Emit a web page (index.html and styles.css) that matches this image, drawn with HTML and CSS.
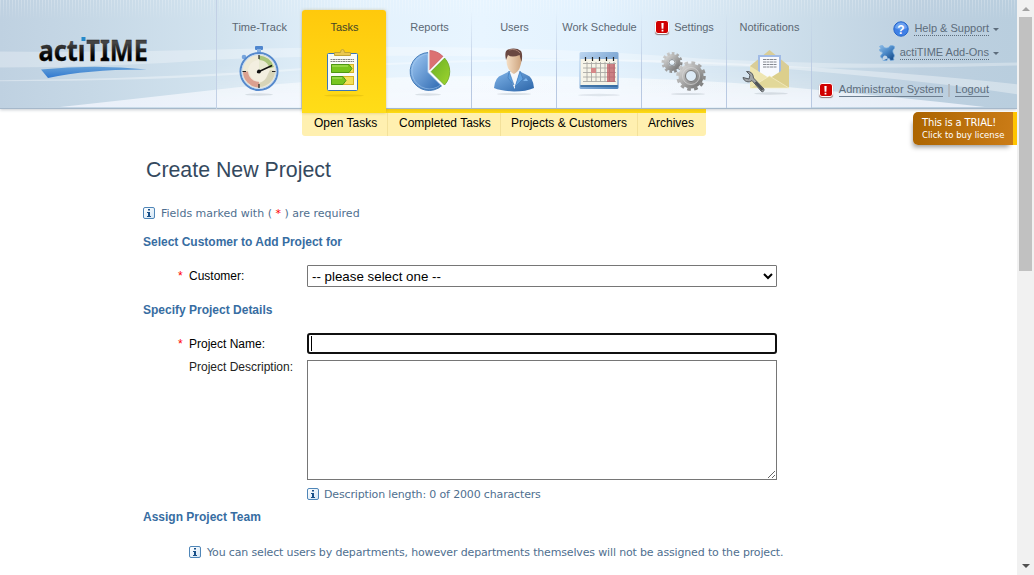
FILE: index.html
```html
<!DOCTYPE html>
<html lang="en">
<head>
<meta charset="utf-8">
<title>actiTIME - Create New Project</title>
<link rel="stylesheet" href="styles.css">
</head>
<body>
<div class="window">
<div class="page">
  <header class="header">
    <svg class="sky" viewBox="0 0 1017 109" preserveAspectRatio="none">
      <defs>
        <linearGradient id="hill" x1="0" y1="0" x2="0" y2="1"><stop offset="0" stop-color="#fff" stop-opacity=".5"/><stop offset="1" stop-color="#f3f6ff" stop-opacity=".8"/></linearGradient>
        <pattern id="pin" width="3" height="20" patternUnits="userSpaceOnUse"><rect width="1" height="20" fill="#fff"/></pattern>
        <linearGradient id="pinfade" x1="0" y1="0" x2="0" y2="1"><stop offset="0" stop-color="#fff" stop-opacity=".25"/><stop offset="1" stop-color="#fff" stop-opacity="0"/></linearGradient>
        <mask id="pm"><rect width="1017" height="20" fill="url(#pinfade)"/></mask>
      </defs>
      <rect width="1017" height="20" fill="url(#pin)" mask="url(#pm)"/>
      <path d="M0 52Q110 53 220 50Q500 42 700 59Q850 67 1017 63V66Q860 71 700 66Q450 50 220 60Q110 68 0 68Z" fill="#fff" opacity=".3"/>
      <path d="M0 82Q150 82 260 74Q500 54 740 66Q900 78 1017 95V85Q900 72 740 64Q500 52 260 72Q130 80 0 81Z" fill="#fff" opacity=".35"/>
      <path d="M60 108Q150 98 220 90Q340 78 450 77Q650 75 800 89Q900 98 985 108Z" fill="url(#hill)"/>
    </svg>
    <svg class="logo" width="120" height="50" viewBox="34 32 120 50">
      <defs>
        <linearGradient id="ink" x1="0" y1="0" x2="0" y2="1"><stop offset=".35" stop-color="#444"/><stop offset=".7" stop-color="#000"/></linearGradient>
        <linearGradient id="swoosh" x1="0" y1="0" x2="0" y2="1"><stop offset="0" stop-color="#64a0d8"/><stop offset="1" stop-color="#2f78d0"/></linearGradient>
        <clipPath id="nodot"><path d="M34 32H78.500V44.300H86.600V32H154V82H34Z"/></clipPath>
      </defs>
      <text class="logo-text" x="38.5" y="60.5" textLength="109.500" lengthAdjust="spacingAndGlyphs" fill="url(#ink)" clip-path="url(#nodot)">actiTIME</text>
      <rect x="81.500" y="37" width="4" height="4" fill="#2589ca"/>
      <path d="M41 69.500Q95 64 147 69.500Q90 69 48 78Z" fill="url(#swoosh)"/>
    </svg>
    <nav class="tabs">
      <a class="tab"><span class="label">Time-Track</span>
        <svg class="icon" viewBox="0 0 50 52">
          <ellipse cx="25" cy="48.500" rx="14" ry="1.200" fill="#6d7c88" opacity=".2"/>
          <rect x="21" y="0" width="8" height="4" rx="1" fill="#4f86ce"/><rect x="23" y="3" width="4" height="5" fill="#86afe0"/>
          <circle cx="10" cy="11" r="2.300" fill="#77a5dd"/>
          <circle cx="25" cy="25.500" r="18.500" fill="#eeead6" stroke="#5589cd" stroke-width="2"/>
          <circle cx="25" cy="25.500" r="17" fill="none" stroke="#c3daf6"/>
          <path d="M25 25.500V9.500A16 16 0 0 1 40 21Z" fill="#a9c57b"/>
          <path d="M9 25.500A16 16 0 0 0 25 41.500V35A10 10 0 0 1 15 25.500Z" fill="#dba090"/>
          <circle cx="25" cy="25" r="11" fill="#f3f0e2" opacity=".85"/>
          <path d="M34 28Q31 36 25 37V41A16 16 0 0 0 41 25L36 24Z" fill="#c8c4a4" opacity=".6"/>
          <path d="M25 9V13M25 38V42M8.500 25.500H12M38 25.500H41.500" stroke="#222" stroke-width="1.200"/>
          <path d="M23 26.500L38 19.500" stroke="#111" stroke-width="1.400"/><circle cx="25" cy="25.500" r="1.900" fill="#111"/>
        </svg></a>
      <a class="tab active"><span class="label">Tasks</span>
        <svg class="icon" viewBox="0 0 50 52">
          <ellipse cx="25" cy="49.500" rx="20" ry="1.200" fill="#a78600" opacity=".2"/>
          <rect x="8.500" y="7.500" width="30" height="37" rx="1" fill="#fafbf5" stroke="#3b77b8"/>
          <path d="M15.500 9.500V6.500H21.500Q21.500 3.500 23.500 3.500Q25.500 3.500 25.500 6.500H31.500V9.500Z" fill="#ebc84e" stroke="#c2a434"/>
          <path d="M11.500 13.500H35M11.500 15.500H35" stroke="#84857e" stroke-dasharray="2 .5"/>
          <rect x="12.500" y="18.500" width="22" height="8" fill="#f4df58" stroke="#d5b425"/><path d="M12.500 18.500H30L33 22.500L30 26.500H12.500Z" fill="#78c51c" stroke="#4c9811"/>
          <path d="M13 20H29" stroke="#b4e769"/>
          <rect x="12.500" y="30.500" width="22" height="8" fill="#f4df58" stroke="#d5b425"/><path d="M12.500 30.500H24L27 34.500L24 38.500H12.500Z" fill="#78c51c" stroke="#4c9811"/><path d="M13 32H23" stroke="#b4e769"/>
        </svg></a>
      <a class="tab"><span class="label">Reports</span>
        <svg class="icon" viewBox="0 0 50 52">
          <defs><linearGradient id="pie" x2="1" y2="1"><stop stop-color="#a5cdf6"/><stop offset="1" stop-color="#2a66af"/></linearGradient><linearGradient id="green" y2="1"><stop stop-color="#68ae25"/><stop offset="1" stop-color="#9fd52e"/></linearGradient></defs>
          <ellipse cx="24" cy="48.500" rx="13" ry="1.200" fill="#6d7c88" opacity=".2"/>
          <path d="M24.500 26L38 39.500A19 19 0 1 1 24.500 6.500Z" fill="url(#pie)" stroke="#477db9" stroke-width="1"/>
          <path d="M23.500 26L36.500 39A17.500 17.500 0 1 1 23.500 8Z" fill="none" stroke="#acd0f2" stroke-width=".7" opacity=".7"/>
          <path d="M25.500 24V4.500A20 20 0 0 1 39 10.500Z" fill="#dc7172" stroke="#c75b61" stroke-width=".8"/>
          <path d="M27 25.500L40.500 12A20 20 0 0 1 40.500 39Z" fill="url(#green)" stroke="#6ca625" stroke-width=".8"/>
          <path d="M24.800 4V26L40 41M25 26L40 11" stroke="#fff" fill="none" stroke-width="1.300"/>
        </svg></a>
      <a class="tab"><span class="label">Users</span>
        <svg class="icon shifted" viewBox="0 0 50 52">
          <defs><linearGradient id="suit" y2="1"><stop stop-color="#80b4e8"/><stop offset="1" stop-color="#2a64a8"/></linearGradient><linearGradient id="skin" x2="1"><stop stop-color="#f5dfc5"/><stop offset="1" stop-color="#cda37d"/></linearGradient></defs>
          <ellipse cx="24" cy="48" rx="17" ry="1" fill="#6d7c88" opacity=".2"/>
          <path d="M4 42Q5 31 12 29L19 25.500H30L37 29Q43 31 44 42Q36 45.500 24 45.500Q11 45 4 42Z" fill="url(#suit)"/>
          <path d="M18.500 26L24.500 43L30 25Z" fill="#f5f7fa"/><path d="M19 25L24 39L18 32ZM30 25L25 41L33 33Z" fill="#60a1df" stroke="#376fae" stroke-width=".5"/>
          <path d="M16.500 10Q16 18 18 22Q21 27 24 28Q29 25 30 21Q32 16 31.500 10Q24 6 16.500 10Z" fill="url(#skin)"/>
          <path d="M16 14Q14 5 18 3.500Q26 1 31 5Q33 8 31.500 16L29.500 9Q22 12 18 9Z" fill="#6a4841"/><path d="M19 4Q26 2 30 7" stroke="#a58074" fill="none"/>
          <path d="M33 35H38L36 32Z" fill="#7db5ed"/>
        </svg></a>
      <a class="tab"><span class="label">Work Schedule</span>
        <svg class="icon shifted" viewBox="0 0 50 52">
          <defs><linearGradient id="cal" y2="1"><stop stop-color="#bed7f1"/><stop offset="1" stop-color="#4b82bd"/></linearGradient></defs>
          <ellipse cx="24" cy="49" rx="21" ry="1.200" fill="#6d7c88" opacity=".15"/>
          <rect x="4.500" y="6" width="39" height="37" rx="1.500" fill="url(#cal)"/>
          <rect x="5.500" y="13" width="37" height="26" fill="#f6f4e8"/>
          <path d="M8 17.500H41M8 22H41M8 26.500H41M8 31H41M8 35.500H41M12 16V36M16.500 16V36M21 16V36M25.500 16V36M30 16V36M34.500 16V36M39 16V36" stroke="#aaa9a5" stroke-width=".9"/>
          <rect x="32" y="18" width="8" height="18" fill="#bd5961" opacity=".75"/><rect x="16" y="22" width="5" height="5" fill="#d68787"/>
          <path d="M10.500 11V15M17.500 11V15M24.500 11V15M31.500 11V15M38.500 11V15" stroke="#252525" stroke-width="1.200"/>
          <path d="M5.500 40H42.500" stroke="#2f6599" stroke-width="1.500"/>
        </svg></a>
      <a class="tab"><span class="label"><i class="alert"><svg viewBox="0 0 8 8"><path d="M3 0H5L4.800 5H3.200ZM3.200 6H4.800V7.600H3.200Z" fill="#fff"/></svg></i>Settings</span>
        <svg class="icon shifted" viewBox="0 0 50 52">
          <defs><linearGradient id="steel" x2="1" y2="1"><stop stop-color="#d4d4d3"/><stop offset="1" stop-color="#777"/></linearGradient></defs>
          <ellipse cx="28" cy="48" rx="17" ry="1" fill="#6d7c88" opacity=".2"/>
          <g fill="none" stroke="url(#steel)"><circle cx="12" cy="16.500" r="6" stroke-width="5"/><circle cx="12" cy="16.500" r="9" stroke-width="3" stroke-dasharray="2.600 2.055"/>
          <circle cx="31" cy="30" r="9" stroke-width="7"/><circle cx="31" cy="30" r="13" stroke-width="3.600" stroke-dasharray="3.600 3.207"/></g>
          <circle cx="12" cy="16.500" r="3" fill="none" stroke="#777" stroke-width=".8"/><circle cx="31" cy="30" r="5.500" fill="none" stroke="#777" stroke-width="1"/><circle cx="31" cy="30" r="8.500" fill="none" stroke="#d9d9d8" stroke-width=".7"/>
        </svg></a>
      <a class="tab"><span class="label">Notifications</span>
        <svg class="icon shifted" viewBox="0 0 50 52">
          <ellipse cx="26" cy="47.500" rx="17" ry="1.200" fill="#6d7c88" opacity=".2"/>
          <path d="M5 20L24.500 4L44 20V42H5Z" fill="#d9cd97"/>
          <rect x="14" y="10" width="21" height="25" fill="#f8fafe" stroke="#a1bbe5" stroke-width="2"/>
          <path d="M18 13.500H32M18 16H32M18 18.500H32M18 21H32" stroke="#777c85" stroke-width=".9" stroke-dasharray="3 .5"/>
          <path d="M44 20L25 32L44 42Z" fill="#dccf8c"/><path d="M5 20L24 32L5 42Z" fill="#efe6b2"/><path d="M5 42L24.500 30L44 42Z" fill="#e2d899" stroke="#f6efc9" stroke-width=".7"/>
          <path d="M4 33L-2 31.500A5.500 5.500 0 0 0 7 34.500L16.500 45.500Q19 46.500 19 43L8.500 32Q8 25 1.500 25.500L5 29Z" fill="#a0a4a7" stroke="#565b5f" stroke-width="1"/><path d="M10.500 36L17.500 44" stroke="#4f5356" stroke-width="2.500"/>
        </svg></a>
    </nav>
    <div class="account">
      <div class="help"><svg class="help-icon" viewBox="0 0 16 16"><circle cx="8" cy="8" r="7.200" fill="#3f80e6" stroke="#2364c9"/><path d="M2 7Q3 1.500 8 1.500Q13 1.500 14 7Q8 10 2 7Z" fill="#8ab7f5" opacity=".6"/><text x="8" y="12.500" text-anchor="middle" class="question">?</text></svg><a class="dotted">Help &amp; Support</a><b class="caret"></b></div>
      <div class="help addons"><svg class="addon-icon" viewBox="0 0 16 16"><defs><linearGradient id="puzzle" x2=".8" y2="1"><stop stop-color="#8dbce6"/><stop offset=".5" stop-color="#4b89c8"/><stop offset="1" stop-color="#174d8c"/></linearGradient></defs><path d="M.5 1.500Q2 0 4 .8L5 2.500Q7.500 3.500 9.500 2.500L11 .8Q13.500 -.3 15.500 1.500Q16 3.500 14 5Q13.500 7 14.500 8.500Q16 10 15 12Q14 13 15 15L11.500 15.500Q10.500 12.500 8.500 13.500L8 15.500L4 15.500Q4.500 13.500 2.500 13Q.5 11 2.500 9.500Q4 8.500 3 7Q0 6.500 .5 4.500L2 3.500Z" fill="url(#puzzle)" stroke="#79aee0" stroke-width=".7"/><path d="M4 15.500Q2.500 12 5.500 10.500Q8.500 10.500 8.500 13.500" fill="#bfd3e6"/></svg><a class="dotted">actiTIME Add-Ons</a><b class="caret"></b></div>
      <div class="user"><i class="alert"><svg viewBox="0 0 8 8"><path d="M3 0H5L4.800 5H3.200ZM3.200 6H4.800V7.600H3.200Z" fill="#fff"/></svg></i><a class="solid admin">Administrator System</a><span class="bar"></span><a class="solid">Logout</a></div>
    </div>
  </header>
  <div class="below">
    <div class="submenu"><a class="s1">Open Tasks</a><a class="s2">Completed Tasks</a><a class="s3">Projects &amp; Customers</a><a class="s4">Archives</a></div>
    <a class="trial"><span class="t1">This is a TRIAL!</span><span class="t2">Click to buy license</span></a>
  </div>
  <main class="main">
    <h1>Create New Project</h1>
    <p class="note required"><i class="info"><svg viewBox="0 0 6 8"><path d="M2 0H4V1.600H2ZM1 3H4V7H5V8H1V7H2V4H1Z" fill="#174f88"/></svg></i><span>Fields marked with ( <em>*</em> ) are required</span></p>
    <h2 class="h-customer">Select Customer to Add Project for</h2>
    <div class="row r-customer"><em>*</em><label>Customer:</label><select><option>-- please select one --</option></select></div>
    <h2 class="h-details">Specify Project Details</h2>
    <div class="row r-name"><em>*</em><label>Project Name:</label><div class="field"><span class="cursor"></span></div></div>
    <div class="row r-desc"><em></em><label>Project Description:</label><textarea></textarea></div>
    <p class="note length"><i class="info"><svg viewBox="0 0 6 8"><path d="M2 0H4V1.600H2ZM1 3H4V7H5V8H1V7H2V4H1Z" fill="#174f88"/></svg></i><span>Description length: 0 of 2000 characters</span></p>
    <h2 class="h-team">Assign Project Team</h2>
    <p class="note team"><i class="info"><svg viewBox="0 0 6 8"><path d="M2 0H4V1.600H2ZM1 3H4V7H5V8H1V7H2V4H1Z" fill="#174f88"/></svg></i><span>You can select users by departments, however departments themselves will not be assigned to the project.</span></p>
  </main>
</div>
<div class="scrollbar"><b class="up"></b><div class="thumb"></div><b class="down"></b></div>
</div>
</body>
</html>
```

FILE: styles.css
```css
* { box-sizing: border-box; }
body { margin: 0; background: #fff; font-family: "Liberation Sans", Arial, sans-serif; font-size: 12px; color: #000; overflow: hidden; }
.window { display: flex; width: 1034px; height: 575px; }
.page { width: 1017px; height: 575px; overflow: hidden; }
.header { position: relative; display: flex; height: 109px; border-bottom: 1px solid #a6b8ca; background: linear-gradient(90deg, #bfd1e1 0, #c6d8e6 90px, #d2e3ef 220px, #e3f1fc 350px, #e8f5ff 480px, #e3f2fe 600px, #d6e6f2 720px, #c9dbe8 820px, #bdd0e0 920px, #b9cede 1017px); box-shadow: 0 1px 3px #c8cdd2; }
.sky { position: absolute; left: 0; top: 0; width: 1017px; height: 108px; }
.logo { position: relative; flex: none; margin: 32px 62px 0 34px; overflow: visible; }
.logo-text { font: bold 29px "Noto Sans", sans-serif; stroke: #222; stroke-width: .3px; }
.tabs { position: relative; z-index: 2; display: flex; flex: none; height: 109px; border-left: 1px solid #c2d0e5; }
.tab { width: 85px; height: 108px; padding-top: 19px; display: flex; flex-direction: column; align-items: center; border-right: 1px solid; border-image: linear-gradient(transparent 10%, #b9c9e2 70%, #b9c9e2) 1; background: linear-gradient(#fff0 60%, #ffffff55); font-size: 11px; color: #5c6874; }
.label { display: flex; align-items: center; height: 16px; white-space: nowrap; padding-left: 1px; }
.tab.active { width: 84px; margin-right: 1px; height: 103px; margin-top: 10px; padding-top: 9px; background: linear-gradient(#ffc90c, #ffdd18); border: 0; border-image: none; border-radius: 3px 3px 0 0; color: #454526; box-shadow: 0 0 3px #b89b4080; }
.icon { width: 50px; height: 52px; margin-top: 11px; flex: none; overflow: visible; }
.icon.shifted { margin-left: 1px; }
.alert { display: inline-flex; align-items: center; justify-content: center; width: 14px; height: 14px; background: #d00000; border: 1px solid #fff; border-radius: 3px; box-shadow: 0 1px 1px #8b7777; margin-right: 5px; }
.alert svg { width: 9px; height: 9px; }
.account { position: absolute; right: 18px; top: 21px; width: 190px; color: #5d6d7c; font-size: 11px; }
.help { display: flex; justify-content: flex-end; align-items: center; height: 16px; white-space: nowrap; }
.addons { margin-top: 8px; }
.help-icon { width: 16px; height: 16px; margin-right: 5px; }
.question { font: bold 12px "Liberation Sans", sans-serif; fill: #fff; }
.addon-icon { width: 16px; height: 16px; margin-right: 5px; }
.dotted { border-bottom: 1px dotted #5d6d7c; line-height: 13px; }
.caret { border: 3px solid transparent; border-top-color: #5d6d7c; border-bottom: 0; margin-left: 4px; }
.user { display: flex; align-items: center; height: 16px; margin-top: 21px; padding-right: 10px; justify-content: flex-end; white-space: nowrap; }
.user .alert { margin-right: 6px; }
.solid { border-bottom: 1px solid #6d7e90; line-height: 13px; }
.bar { width: 2px; height: 13px; background: #b4bac0; margin: 0 5px; }
.below { position: relative; display: flex; justify-content: space-between; height: 48px; padding-left: 302px; }
.submenu { display: flex; width: 404px; height: 27px; padding-top: 4px; background: linear-gradient(#efc713, #ffdc14 4px, #fff0b0 4px); border-radius: 0 0 3px 3px; font-size: 12px; line-height: 20px; white-space: nowrap; }
.submenu a { height: 23px; border-right: 1px solid #f3e19a; padding-left: 12px; }
.submenu .s1 { width: 86px; }
.submenu .s2 { width: 113px; padding-left: 11px; }
.submenu .s3 { width: 137px; padding-left: 10px; }
.submenu .s4 { width: 68px; padding-left: 10px; border: 0; }
.trial { display: flex; flex-direction: column; width: 104px; height: 33px; margin-top: 3px; padding: 4px 0 0 9px; border-right: 4px solid #ffc400; border-radius: 5px 0 0 5px; background: linear-gradient(100deg, #ab6400, #cb7c17); box-shadow: -4px 6px 5px -4px #999; color: #fff; white-space: nowrap; }
.t1 { font: 10px/13px "DejaVu Sans", sans-serif; letter-spacing: -.15px; }
.t2 { font: 8.5px/12px "DejaVu Sans", sans-serif; }
.main { padding-left: 143px; }
h1 { margin: 0 0 0 3px; height: 26px; line-height: 26px; font-size: 21.333px; font-weight: 400; color: #34495e; }
h2 { margin: 0; height: 16px; line-height: 16px; font-size: 12px; color: #376da2; }
.note { display: flex; align-items: center; height: 16px; margin: 0; font: 11px/16px "DejaVu Sans", sans-serif; color: #4f6f8f; white-space: nowrap; }
.note span { position: relative; top: 1px; letter-spacing: -.155px; }
.note.required span { letter-spacing: 0; }
.info { display: flex; align-items: center; justify-content: center; width: 12px; height: 12px; margin-right: 6px; flex: none; border: 1px solid #4f86b8; border-radius: 2px; background: linear-gradient(135deg, #fff, #d4e6f5); }
.length .info { margin-right: 5px; }
.info svg { width: 6px; height: 8px; }
em { font-style: normal; color: red; }
.required { margin-top: 22px; }
.h-customer { margin-top: 13px; }
.row { display: flex; align-items: flex-start; line-height: 22px; }
.row em { width: 46px; padding-left: 35px; }
.row label { width: 118px; }
.r-customer { margin-top: 15px; }
select { width: 470px; height: 22px; border: 1px solid #767676; border-radius: 1px; background-color: #fff; font: 13.333px "Liberation Sans", sans-serif; }
.h-details { margin-top: 15px; }
.r-name { height: 21px; margin-top: 15px; }
.field { width: 470px; height: 21px; border: 2px solid #101010; border-radius: 3px; padding: 1px 2px; }
.cursor { display: block; width: 1px; height: 15px; background: #000; }
.r-desc { margin-top: 6px; }
.r-desc label { line-height: 14px; color: #222; }
textarea { width: 470px; height: 120px; margin: 0; border: 1px solid #767676; border-radius: 0; }
.length { margin: 6px 0 0 164px; }
.h-team { margin-top: 7px; }
.team { margin: 19px 0 0 46px; }
.scrollbar { width: 17px; height: 575px; display: flex; flex-direction: column; align-items: center; background: #f1f1f1; }
.up { margin-top: 7px; border: 4px solid transparent; border-top: 0; border-bottom-color: #a3a3a3; }
.thumb { width: 13px; height: 254px; margin-top: 6px; background: #c1c1c1; }
.down { margin-top: auto; margin-bottom: 7px; border: 4px solid transparent; border-bottom: 0; border-top-color: #505050; }
```
